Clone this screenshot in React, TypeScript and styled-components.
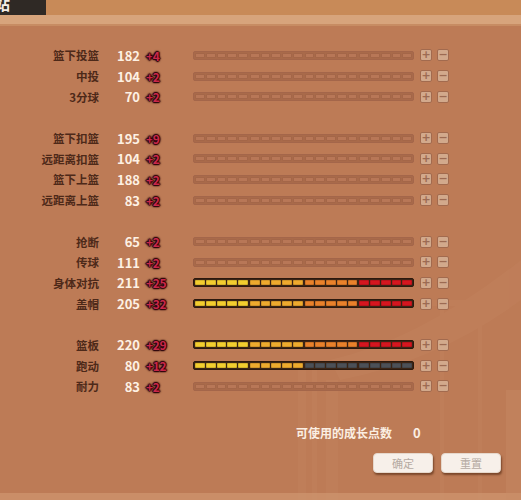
import React from 'react';
import styled, { createGlobalStyle } from 'styled-components';

const GlobalStyle = createGlobalStyle`
  html, body {
    margin: 0;
    padding: 0;
    background: #bd7b56;
    overflow: hidden;
  }
`;

const Screen = styled.div`
  position: relative;
  width: 521px;
  height: 500px;
  overflow: hidden;
  background: #bd7b56;
  font-family: 'Noto Sans CJK SC', 'Noto Sans', sans-serif;
  display: flex;
  flex-direction: column;
`;

const Backdrop = styled.svg`
  position: absolute;
  left: 0;
  top: 0;
  pointer-events: none;
`;

const TopBar = styled.div`
  height: 15px;
  background: #c88a58;
  display: flex;
  flex-shrink: 0;
`;

const Tab = styled.div`
  width: 46px;
  height: 15px;
  background: #2f2925;
  color: #f4ece4;
  font-size: 15px;
  font-weight: 700;
  line-height: 15px;
  overflow: hidden;
  box-sizing: border-box;

  span {
    display: inline-block;
    transform: translate(-5px, -4px);
  }
`;

const Stripe = styled.div`
  height: 9px;
  background: #d7a47c;
  border-bottom: 2px solid #c78c63;
  flex-shrink: 0;
`;

const Content = styled.div`
  position: relative;
  padding-top: 19px;
  display: flex;
  flex-direction: column;
  gap: 20.7px;
`;

const Group = styled.div`
  display: flex;
  flex-direction: column;
`;

const Row = styled.div`
  height: 20.7px;
  display: grid;
  grid-template-columns: 99px 41px 53px 221px auto;
  align-items: center;
`;

const Label = styled.div`
  text-align: right;
  font-size: 11.5px;
  font-weight: 700;
  color: #4d2919;
  white-space: nowrap;
`;

const Value = styled.div`
  text-align: right;
  font-size: 13px;
  font-weight: 700;
  color: #fdf1e4;
`;

const Bonus = styled.div`
  padding-left: 6px;
  font-size: 12px;
  font-weight: 700;
  color: #c8284a;
  letter-spacing: -0.3px;
  text-shadow: 0 0 2px #2e050c, 0 0 2px #2e050c, 0 0 3px #2e050c, 1px 0 1px #2e050c, -1px 0 1px #2e050c,
    0 1px 1px #2e050c, 0 -1px 1px #2e050c;
`;

const Bar = styled.div<{ $filled: boolean }>`
  height: 9px;
  box-sizing: border-box;
  border-radius: 2px;
  padding: 1px;
  display: grid;
  grid-template-columns: repeat(4, 1fr);
  column-gap: 2px;
  background: ${p => (p.$filled ? '#3b2415' : '#a96a4a')};
  border: 1px solid ${p => (p.$filled ? '#2c190e' : '#a4664a')};
`;

const Segment = styled.div`
  display: grid;
  grid-template-columns: repeat(5, 1fr);
  column-gap: 1px;
`;

const Cell = styled.div<{ $color: string; $empty: boolean }>`
  border-radius: 1px;
  background: ${p => p.$color};
  box-shadow: inset 0 0 0 1px ${p => (p.$empty ? 'rgba(150, 92, 62, 0.6)' : 'rgba(0, 0, 0, 0.12)')};
`;

const Steps = styled.div`
  display: flex;
  gap: 5px;
  padding-left: 6px;
`;

const StepButton = styled.div`
  width: 12px;
  height: 12px;
  box-sizing: border-box;
  border: 1px solid #a26a4e;
  border-radius: 2px;
  background: #d2a98c;
  color: #9c6a52;
  font-family: 'DejaVu Sans', sans-serif;
  font-size: 11px;
  font-weight: 700;
  line-height: 10px;
  text-align: center;
`;

const Footer = styled.div`
  position: relative;
  padding-top: 26px;
  padding-left: 296px;
  display: flex;
  align-items: center;
  gap: 21px;
`;

const PointsLabel = styled.div`
  font-size: 12px;
  font-weight: 700;
  color: #fbeee2;
`;

const PointsValue = styled.div`
  font-size: 13px;
  font-weight: 700;
  color: #fbeee2;
`;

const Actions = styled.div`
  position: relative;
  display: flex;
  gap: 8px;
  padding-left: 373px;
  padding-top: 11px;
`;

const ActionButton = styled.div`
  width: 60px;
  height: 20px;
  box-sizing: border-box;
  border-radius: 4px;
  background: #f7f0ea;
  border: 1px solid #e6d8cc;
  box-shadow: 1px 2px 2px rgba(70, 30, 10, 0.55);
  color: #b5aaa2;
  font-size: 11px;
  line-height: 18px;
  text-align: center;
`;

type Stat = { name: string; value: number; bonus: number; fill: number };

const groups: Stat[][] = [
  [
    { name: '篮下投篮', value: 182, bonus: 4, fill: 0 },
    { name: '中投', value: 104, bonus: 2, fill: 0 },
    { name: '3分球', value: 70, bonus: 2, fill: 0 },
  ],
  [
    { name: '篮下扣篮', value: 195, bonus: 9, fill: 0 },
    { name: '远距离扣篮', value: 104, bonus: 2, fill: 0 },
    { name: '篮下上篮', value: 188, bonus: 2, fill: 0 },
    { name: '远距离上篮', value: 83, bonus: 2, fill: 0 },
  ],
  [
    { name: '抢断', value: 65, bonus: 2, fill: 0 },
    { name: '传球', value: 111, bonus: 2, fill: 0 },
    { name: '身体对抗', value: 211, bonus: 25, fill: 4 },
    { name: '盖帽', value: 205, bonus: 32, fill: 4 },
  ],
  [
    { name: '篮板', value: 220, bonus: 29, fill: 4 },
    { name: '跑动', value: 80, bonus: 12, fill: 2 },
    { name: '耐力', value: 83, bonus: 2, fill: 0 },
  ],
];

const segColors = ['#f3cd2f', '#eeaa2e', '#e9812b', '#d5161f'];
const EMPTY_CELL = '#b87757';
const GRAY_CELL = '#4c5057';

const StatBar: React.FC<{ fill: number }> = ({ fill }) => {
  const filled = fill > 0;
  return (
    <Bar $filled={filled}>
      {segColors.map((c, i) => {
        const color = !filled ? EMPTY_CELL : i < fill ? c : GRAY_CELL;
        return (
          <Segment key={i}>
            {[0, 1, 2, 3, 4].map(j => (
              <Cell key={j} $color={color} $empty={!filled} />
            ))}
          </Segment>
        );
      })}
    </Bar>
  );
};

export default function App() {
  return (
    <>
      <GlobalStyle />
      <Screen>
        <Backdrop width="521" height="500" viewBox="0 0 521 500">
          <g fill="#d8a07a" opacity="0.09">
            <rect x="298" y="370" width="8" height="130" />
            <rect x="312" y="370" width="5" height="130" />
            <rect x="326" y="380" width="12" height="120" />
            <path d="M330 360 Q420 340 521 260 L521 300 Q440 360 340 380 Z" />
            <rect x="430" y="300" width="60" height="6" />
            <rect x="440" y="306" width="4" height="194" />
            <rect x="478" y="306" width="4" height="194" />
          </g>
          <rect x="0" y="493" width="521" height="7" fill="#d29b75" opacity="0.6" />
          <rect x="506" y="390" width="15" height="110" fill="#c98d66" opacity="0.4" />
        </Backdrop>
        <TopBar>
          <Tab>
            <span>站</span>
          </Tab>
        </TopBar>
        <Stripe />
        <Content>
          {groups.map((g, gi) => (
            <Group key={gi}>
              {g.map(s => (
                <Row key={s.name}>
                  <Label>{s.name}</Label>
                  <Value>{s.value}</Value>
                  <Bonus>+{s.bonus}</Bonus>
                  <StatBar fill={s.fill} />
                  <Steps>
                    <StepButton>+</StepButton>
                    <StepButton>−</StepButton>
                  </Steps>
                </Row>
              ))}
            </Group>
          ))}
        </Content>
        <Footer>
          <PointsLabel>可使用的成长点数</PointsLabel>
          <PointsValue>0</PointsValue>
        </Footer>
        <Actions>
          <ActionButton>确定</ActionButton>
          <ActionButton>重置</ActionButton>
        </Actions>
      </Screen>
    </>
  );
}
